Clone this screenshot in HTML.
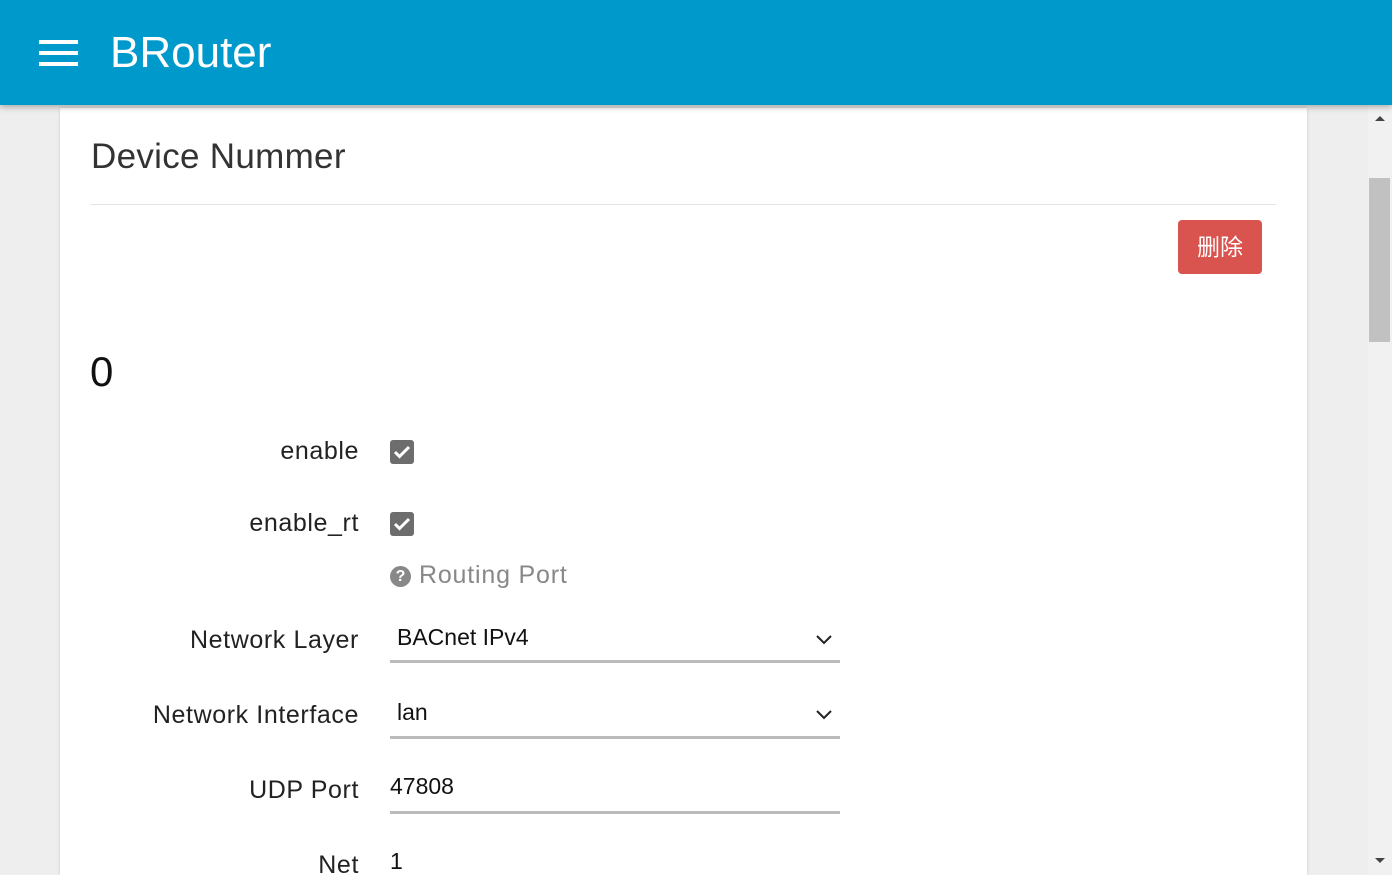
<!DOCTYPE html>
<html><head><meta charset="utf-8"><style>
*{box-sizing:border-box;margin:0;padding:0}
html,body{width:1392px;height:875px;overflow:hidden}
body{background:#eeeeee;font-family:"Liberation Sans","Noto Sans CJK SC",sans-serif;position:relative}
.hdr{position:absolute;left:0;top:0;width:1392px;height:105px;background:#0099cc;box-shadow:0 2px 6px rgba(0,0,0,.3);z-index:2}
.bar{position:absolute;left:39px;width:39px;height:4px;background:#fff}
.title{position:absolute;left:110px;top:28px;color:#fff;font-size:44px}
.card{position:absolute;left:60px;top:108px;width:1247px;height:767px;background:#fff;box-shadow:0 0 3px rgba(0,0,0,.15)}
.h{position:absolute;left:91px;top:137px;font-size:35px;letter-spacing:0.3px;color:#333}
.hr{position:absolute;left:90px;top:204px;width:1186px;height:1px;background:#e5e5e5}
.btn{position:absolute;left:1178px;top:220px;width:84px;height:54px;background:#d9534f;border-radius:4px;color:#fff;font-size:23px;text-align:center;line-height:54px}
.zero{position:absolute;left:90px;top:348px;font-size:42px;color:#111}
.lbl{position:absolute;right:1033px;font-size:25px;letter-spacing:0.6px;color:#222;text-align:right;white-space:nowrap}
.cb{position:absolute;left:390px;width:24px;height:24px;background:#6d6d6d;border-radius:3px}
.cb svg{position:absolute;left:3px;top:4px}
.help{position:absolute;left:390px;top:561px;font-size:25px;letter-spacing:0.8px;color:#888}
.help i{display:inline-block;width:21px;height:21px;border-radius:50%;background:#888;color:#fff;font-style:normal;font-size:16px;font-weight:bold;text-align:center;line-height:21px;vertical-align:2px;margin-right:8px;letter-spacing:0}
.sel{position:absolute;left:390px;width:450px;height:3px;background:#bbb}
.val{position:absolute;font-size:23px;color:#111}
.sb{position:absolute;left:1368px;top:105px;width:24px;height:770px;background:#f1f1f1}
.thumb{position:absolute;left:1369px;top:178px;width:21px;height:164px;background:#c1c1c1}
</style></head><body>
<div class="hdr">
<div class="bar" style="top:40px"></div><div class="bar" style="top:51px"></div><div class="bar" style="top:62px"></div>
<div class="title">BRouter</div>
</div>
<div class="card"></div>
<div class="h">Device Nummer</div>
<div class="hr"></div>
<div class="btn">删除</div>
<div class="zero">0</div>
<div class="lbl" style="top:437px">enable</div>
<div class="cb" style="top:440px"><svg width="18" height="16" viewBox="0 0 18 16"><path d="M2 8l4.5 4.5L16 3" stroke="#fff" stroke-width="3" fill="none"/></svg></div>
<div class="lbl" style="top:509px">enable_rt</div>
<div class="cb" style="top:512px"><svg width="18" height="16" viewBox="0 0 18 16"><path d="M2 8l4.5 4.5L16 3" stroke="#fff" stroke-width="3" fill="none"/></svg></div>
<div class="help"><i>?</i>Routing Port</div>
<div class="lbl" style="top:626px">Network Layer</div>
<div class="val" style="left:397px;top:624px">BACnet IPv4</div>
<svg style="position:absolute;left:815px;top:633px" width="18" height="12"><path d="M2 3l7 7 7-7" stroke="#222" stroke-width="2" fill="none"/></svg>
<div class="sel" style="top:660px"></div>
<div class="lbl" style="top:701px">Network Interface</div>
<div class="val" style="left:397px;top:699px">lan</div>
<svg style="position:absolute;left:815px;top:708px" width="18" height="12"><path d="M2 3l7 7 7-7" stroke="#222" stroke-width="2" fill="none"/></svg>
<div class="sel" style="top:736px"></div>
<div class="lbl" style="top:776px">UDP Port</div>
<div class="val" style="left:390px;top:773px">47808</div>
<div class="sel" style="top:811px"></div>
<div class="lbl" style="top:851px">Net</div>
<div class="val" style="left:390px;top:848px">1</div>
<div class="sb"></div>
<div class="thumb"></div>
<svg style="position:absolute;left:1374px;top:114px" width="12" height="8"><path d="M1 7L6 2l5 5z" fill="#444"/></svg>
<svg style="position:absolute;left:1374px;top:857px" width="12" height="8"><path d="M1 1l5 5 5-5z" fill="#444"/></svg>
</body></html>
